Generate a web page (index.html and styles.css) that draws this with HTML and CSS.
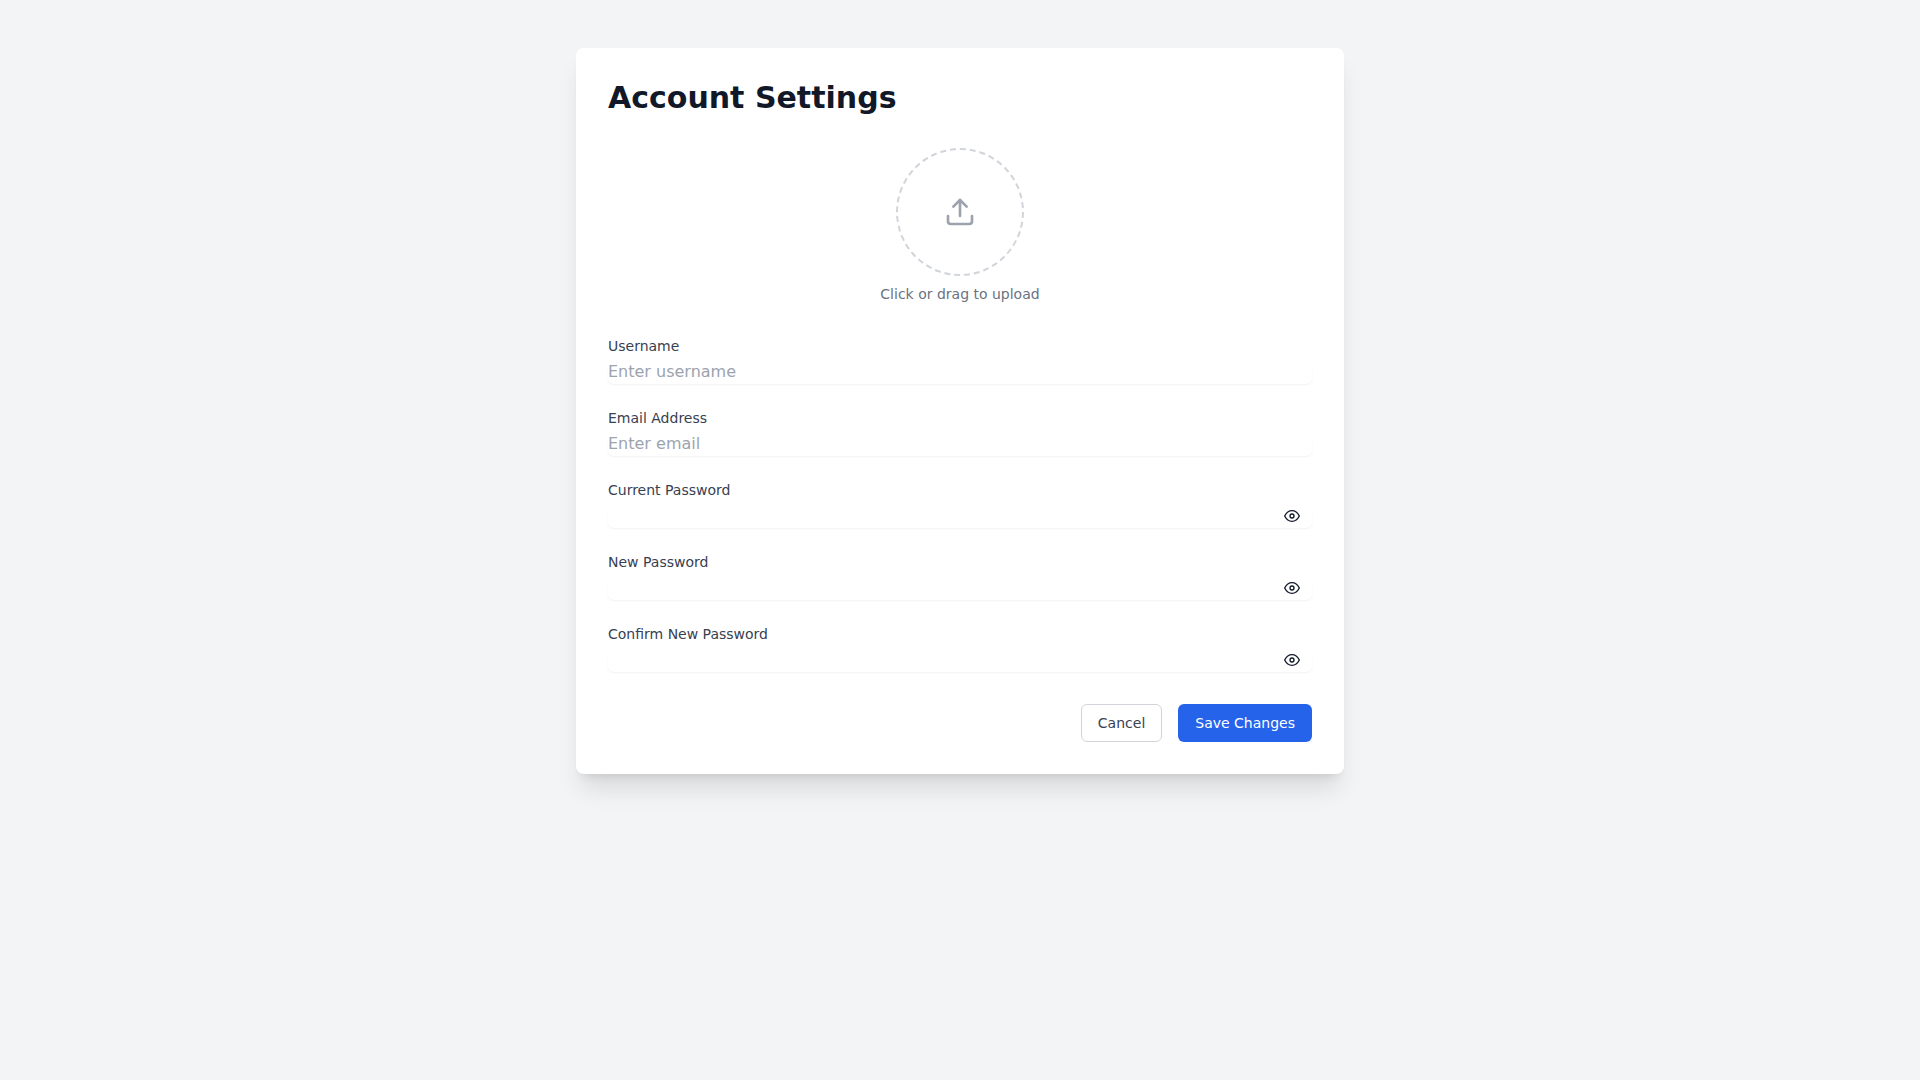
FILE: index.html
```html
<!DOCTYPE html>
<html lang="en">
<head>
    <meta charset="UTF-8">
    <meta name="viewport" content="width=device-width, initial-scale=1.0">
    <title>Account Settings</title>
    <link rel="stylesheet" href="styles.css">
</head>
<body>

<!-- Shared eye icon -->
<svg class="sprite" aria-hidden="true">
    <symbol id="icon-eye" viewBox="0 0 24 24">
        <path d="M1 12s4-8 11-8 11 8 11 8-4 8-11 8-11-8-11-8z"></path>
        <circle cx="12" cy="12" r="3"></circle>
    </symbol>
</svg>

<main class="card">
    <h1>Account Settings</h1>

    <form id="settings-form">
        <div class="upload">
            <label class="dropzone" id="dropzone" for="avatar" aria-label="Profile picture">
                <svg class="icon icon-upload" viewBox="0 0 24 24" aria-hidden="true">
                    <path d="M21 15v4a2 2 0 0 1-2 2H5a2 2 0 0 1-2-2v-4"></path>
                    <polyline points="17 8 12 3 7 8"></polyline>
                    <line x1="12" y1="3" x2="12" y2="15"></line>
                </svg>
                <input class="file-input" type="file" id="avatar" accept="image/*">
            </label>
            <p class="hint">Click or drag to upload</p>
        </div>

        <div class="field">
            <label for="username">Username</label>
            <input class="input" type="text" id="username" placeholder="Enter username">
        </div>

        <div class="field">
            <label for="email">Email Address</label>
            <input class="input" type="email" id="email" placeholder="Enter email">
        </div>

        <div class="field">
            <label for="current-password">Current Password</label>
            <div class="password">
                <input class="input" type="password" id="current-password">
                <button class="toggle" type="button" aria-label="Show current password">
                    <svg class="icon icon-eye"><use href="#icon-eye"></use></svg>
                </button>
            </div>
        </div>

        <div class="field">
            <label for="new-password">New Password</label>
            <div class="password">
                <input class="input" type="password" id="new-password">
                <button class="toggle" type="button" aria-label="Show new password">
                    <svg class="icon icon-eye"><use href="#icon-eye"></use></svg>
                </button>
            </div>
        </div>

        <div class="field">
            <label for="confirm-password">Confirm New Password</label>
            <div class="password">
                <input class="input" type="password" id="confirm-password">
                <button class="toggle" type="button" aria-label="Show confirmed password">
                    <svg class="icon icon-eye"><use href="#icon-eye"></use></svg>
                </button>
            </div>
        </div>

        <div class="actions">
            <button class="btn btn-cancel" type="reset">Cancel</button>
            <button class="btn btn-save" type="submit">Save Changes</button>
        </div>
    </form>
</main>

<script>
    // Show or hide the password next to the clicked eye
    document.querySelectorAll(".toggle").forEach(button => {
        button.addEventListener("click", () => {
            let input = button.previousElementSibling;
            input.type = input.type === "password" ? "text" : "password";
        });
    });

    let dropzone = document.getElementById("dropzone");
    dropzone.addEventListener("dragover", e => e.preventDefault());
    dropzone.addEventListener("drop", e => {
        e.preventDefault();
        document.getElementById("avatar").files = e.dataTransfer.files;
    });

    document.getElementById("settings-form").addEventListener("submit", e => e.preventDefault());
</script>

</body>
</html>
```

FILE: styles.css
```css
* {
    box-sizing: border-box;
}
body {
    margin: 0;
    min-height: 100vh;
    padding: 48px 16px;
    background-color: #f3f4f6;
    color: #111827;
    font-family: "DejaVu Sans", sans-serif;
    font-size: 16px;
    line-height: 24px;
}
.sprite {
    display: none;
}
.card {
    max-width: 768px;
    margin: 0 auto;
    padding: 32px;
    background-color: white;
    border-radius: 8px;
    box-shadow: 0 20px 25px -5px rgba(0, 0, 0, 0.1), 0 8px 10px -6px rgba(0, 0, 0, 0.1);
}
h1 {
    margin: 0 0 32px;
    font-size: 30px;
    line-height: 36px;
    font-weight: bold;
}
.icon {
    display: block;
    fill: none;
    stroke: currentColor;
    stroke-width: 2;
    stroke-linecap: round;
    stroke-linejoin: round;
}
.icon-upload {
    width: 32px;
    height: 32px;
}
.icon-eye {
    width: 16px;
    height: 16px;
}

/* Profile picture */
.upload {
    display: flex;
    flex-direction: column;
    align-items: center;
    margin-bottom: 32px;
}
.dropzone {
    display: flex;
    align-items: center;
    justify-content: center;
    position: relative;
    width: 128px;
    height: 128px;
    border: 2px dashed #d1d5db;
    border-radius: 50%;
    color: #9ca3af;
    cursor: pointer;
}
.dropzone:hover {
    border-color: #2563eb;
}
.file-input {
    position: absolute;
    width: 100%;
    height: 100%;
    opacity: 0;
    cursor: pointer;
}
.hint {
    margin: 8px 0 0;
    color: #6b7280;
    font-size: 14px;
    line-height: 20px;
}

/* Fields */
.field {
    display: flex;
    flex-direction: column;
    gap: 4px;
    margin-bottom: 24px;
}
.field label {
    color: #374151;
    font-size: 14px;
    line-height: 20px;
}
.input {
    display: block;
    width: 100%;
    height: 24px;
    padding: 0;
    border: none;
    border-radius: 6px;
    background-color: white;
    color: inherit;
    font: inherit;
    box-shadow: 0 1px 2px 0 rgba(0, 0, 0, 0.05);
}
.input::placeholder {
    color: #9ca3af;
}
.password {
    position: relative;
}
.toggle {
    display: flex;
    align-items: center;
    position: absolute;
    top: 0;
    bottom: 0;
    right: 0;
    padding: 0 12px;
    border: none;
    background: none;
    color: inherit;
    cursor: pointer;
}

/* Buttons */
.actions {
    display: flex;
    justify-content: flex-end;
    gap: 16px;
    margin-top: 32px;
}
.btn {
    padding: 8px 16px;
    border: 1px solid transparent;
    border-radius: 6px;
    font: inherit;
    font-size: 14px;
    line-height: 20px;
    cursor: pointer;
}
.btn-cancel {
    background-color: white;
    border-color: #d1d5db;
    color: #374151;
}
.btn-cancel:hover {
    background-color: #f9fafb;
}
.btn-save {
    background-color: #2563eb;
    color: white;
}
.btn-save:hover {
    background-color: #1d4ed8;
}
```
